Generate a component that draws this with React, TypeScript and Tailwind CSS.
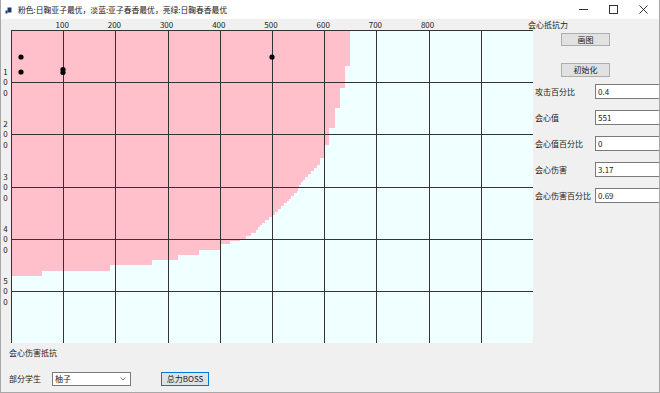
const STEP = 52.2;
const CHART_W = 522;
const CHART_H = 313;

// right edge of the pink area: [bottom y, x] in window pixels, top to bottom
const pinkEdge: [number, number][] = [
  [66, 350], [88, 345], [108, 340], [128, 335], [145, 329], [158, 324], [165, 320],
  [168, 317], [171, 314], [174, 311], [177, 308], [180, 305], [182, 303], [185, 301],
  [188, 299], [191, 298], [193, 297], [196, 294], [199, 291], [201, 289], [203, 287],
  [206, 284], [209, 281], [212, 278], [215, 275], [217, 273], [220, 269], [223, 265],
  [225, 262], [227, 260], [230, 258], [233, 256], [236, 251], [239, 246], [241, 240],
  [244, 230], [250, 220], [255, 199], [260, 178], [265, 152], [271, 110], [276, 42],
];

const dots: [number, number][] = [
  [21, 57], [21, 72], [63, 69.5], [63, 72.5], [272, 57],
];

function pinkPath() {
  let d = 'M0,0';
  let prevY = 0;
  for (const [gy, gx] of pinkEdge) {
    const x = gx - 11;
    const y = gy - 30;
    d += ` L${x},${prevY} L${x},${y}`;
    prevY = y;
  }
  return d + ` L0,${prevY} Z`;
}

function Chart() {
  const cols = Array.from({ length: 10 }, (_, k) => Math.round(STEP * k) + 0.5);
  const rows = Array.from({ length: 6 }, (_, k) => Math.round(STEP * k) + 0.5);
  return (
    <div className="w-[522px] h-[313px] bg-[#f0ffff] shrink-0">
      <svg width={CHART_W} height={CHART_H} className="block">
        <path d={pinkPath()} fill="#ffc0cb" />
        {cols.map((x) => (
          <line key={'v' + x} x1={x} y1={0} x2={x} y2={CHART_H} stroke="#333" strokeWidth={1} shapeRendering="crispEdges" />
        ))}
        {rows.map((y) => (
          <line key={'h' + y} x1={0} y1={y} x2={CHART_W} y2={y} stroke="#333" strokeWidth={1} shapeRendering="crispEdges" />
        ))}
        {dots.map(([x, y], i) => (
          <circle key={i} cx={x - 11} cy={y - 30} r={2.6} fill="#000" />
        ))}
      </svg>
    </div>
  );
}

function WinButton({ label, w, blue }: { label: string; w: string; blue?: boolean }) {
  return (
    <div
      className={`${w} h-full flex items-center justify-center bg-[#e1e1e1] border ${blue ? 'border-[#0078d7]' : 'border-[#adadad]'} leading-none`}
    >
      {label}
    </div>
  );
}

const fields = [
  { label: '攻击百分比', value: '0.4' },
  { label: '会心值', value: '551' },
  { label: '会心值百分比', value: '0' },
  { label: '会心伤害', value: '3.17' },
  { label: '会心伤害百分比', value: '0.69' },
];

export default function App() {
  return (
    <div className="w-[660px] h-[393px] overflow-hidden bg-[#f0f0f0] border-x border-b border-[#a8a8a8] flex flex-col text-[8px] text-[#222] font-['Noto_Sans_CJK_SC',sans-serif]">
      {/* title bar */}
      <div className="h-[19px] bg-white flex items-center shrink-0">
        <svg width="17" height="19" className="shrink-0">
          <rect x="6.5" y="7.5" width="4" height="5" fill="#1e3a6e" />
          <rect x="4.5" y="10.5" width="2" height="3" fill="#1e3a6e" />
        </svg>
        <span className="text-[7.8px] leading-none">粉色:日鞠亚子最优，淡蓝:亚子春香最优，亮绿:日鞠春香最优</span>
        <div className="ml-auto flex h-full mr-[1px]">
          <div className="w-[30px] flex items-center justify-center">
            <svg width="9" height="9"><line x1="0" y1="4.5" x2="9" y2="4.5" stroke="#333" /></svg>
          </div>
          <div className="w-[30px] flex items-center justify-center">
            <svg width="9" height="9"><rect x="0.5" y="0.5" width="8" height="8" fill="none" stroke="#333" /></svg>
          </div>
          <div className="w-[30px] flex items-center justify-center">
            <svg width="9" height="9"><path d="M0.5 0.5 L8.5 8.5 M8.5 0.5 L0.5 8.5" stroke="#333" /></svg>
          </div>
        </div>
      </div>

      {/* tick row */}
      <div className="relative h-[11px] shrink-0 leading-[11px]">
        {[100, 200, 300, 400, 500, 600, 700, 800].map((t, i) => (
          <span
            key={t}
            className="absolute top-0 -translate-x-1/2"
            style={{ left: 9 + STEP * (i + 1) }}
          >
            {t}
          </span>
        ))}
        <span className="absolute top-0 left-[527px]">会心抵抗力</span>
      </div>

      {/* chart + side panel */}
      <div className="flex h-[313px] shrink-0">
        <div className="relative w-[10px] shrink-0">
          {[100, 200, 300, 400, 500].map((t, i) => (
            <div
              key={t}
              className="absolute left-0 w-[9px] flex flex-col items-center leading-[10.5px]"
              style={{ top: Math.round(STEP * (i + 1)) - 15.5 }}
            >
              {String(t).split('').map((c, j) => (
                <span key={j}>{c}</span>
              ))}
            </div>
          ))}
        </div>
        <Chart />
        <div className="flex-1 flex flex-col overflow-hidden">
          <div className="h-[13px] mt-[3px] ml-[28px]">
            <WinButton label="画图" w="w-[49px]" />
          </div>
          <div className="h-[14px] mt-[17px] ml-[28px]">
            <WinButton label="初始化" w="w-[49px]" />
          </div>
          <div className="mt-[7px] flex flex-col gap-[11px]">
            {fields.map((f) => (
              <div key={f.label} className="flex items-center h-[15px]">
                <span className="w-[62px] pl-[2px] shrink-0">{f.label}</span>
                <div className="w-[80px] h-full shrink-0 bg-white border border-[#7a7a7a] flex items-center pl-[2px]">
                  {f.value}
                </div>
              </div>
            ))}
          </div>
        </div>
      </div>

      {/* bottom */}
      <div className="pl-[8px] mt-[4px] h-[11px] leading-[11px]">会心伤害抵抗</div>
      <div className="flex items-center h-[14px] mt-[14px] pl-[8px]">
        <span className="w-[43px]">部分学生</span>
        <div className="w-[79px] h-full bg-white border border-[#7a7a7a] flex items-center pl-[2px]">
          <span>柚子</span>
          <svg width="6" height="4" className="ml-auto mr-[4px]">
            <polyline points="0.5,0.5 3,3 5.5,0.5" fill="none" stroke="#555" strokeWidth="0.8" />
          </svg>
        </div>
        <div className="ml-[30px] h-full">
          <WinButton label="总力BOSS" w="w-[48px]" blue />
        </div>
      </div>
    </div>
  );
}
